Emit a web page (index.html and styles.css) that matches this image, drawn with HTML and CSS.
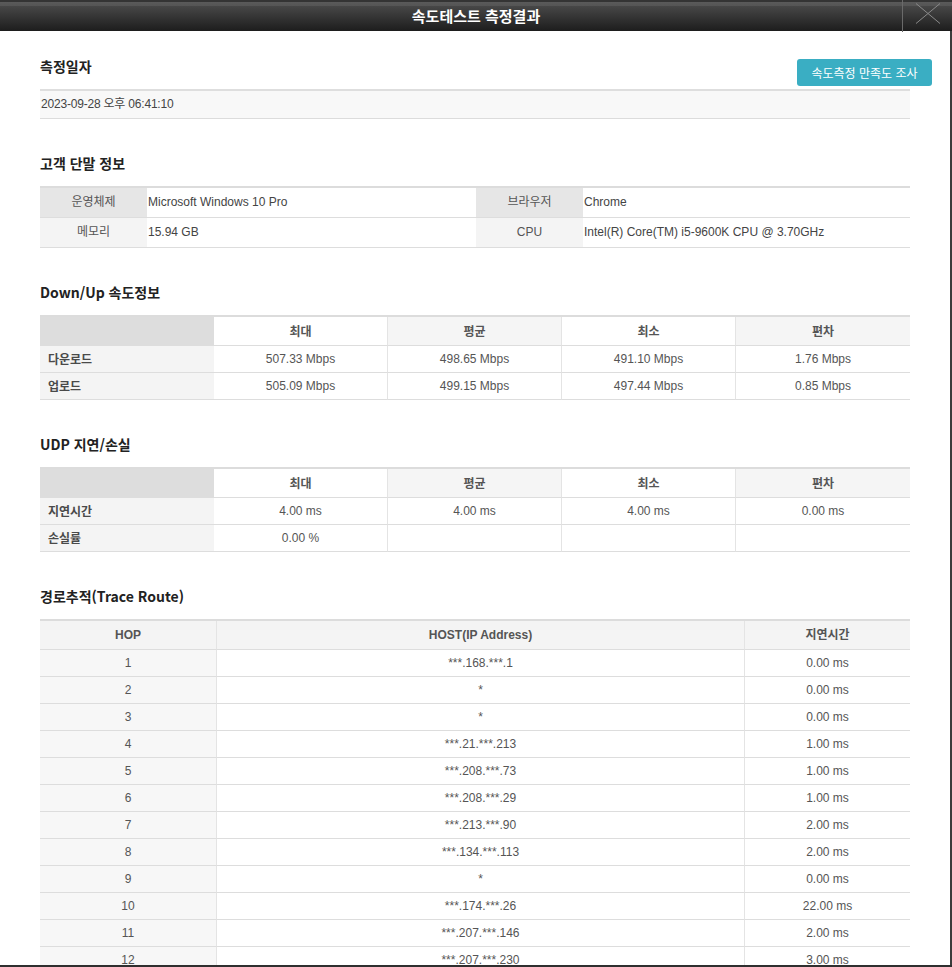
FILE: index.html
```html
<!DOCTYPE html>
<html lang="ko">
<head>
<meta charset="utf-8">
<title>속도테스트 측정결과</title>
<link rel="stylesheet" href="styles.css">
</head>
<body>
<div class="popup">
  <header class="titlebar">
    <h1 class="title">속도테스트 측정결과</h1>
    <button class="close" type="button" aria-label="닫기">
      <svg width="49" height="31" viewBox="0 0 49 31"><path d="M13 2.5 L37 22.5 M37 2.5 L13 22.5" stroke="#8a8a8a" stroke-width="1" fill="none"/></svg>
    </button>
  </header>
  <main class="content">
    <section class="section first">
      <div class="head-row">
        <h2 class="sec-title">측정일자</h2>
        <button class="survey" type="button">속도측정 만족도 조사</button>
      </div>
      <div class="date-band">2023-09-28 오후 06:41:10</div>
    </section>

    <section class="section">
      <h2 class="sec-title">고객 단말 정보</h2>
      <table class="tbl info">
        <colgroup><col class="c-lab"><col class="c-val1"><col class="c-lab"><col class="c-val2"></colgroup>
        <tr class="dark"><td class="lab">운영체제</td><td class="val">Microsoft Windows 10 Pro</td><td class="lab">브라우저</td><td class="val">Chrome</td></tr>
        <tr class="light"><td class="lab">메모리</td><td class="val">15.94 GB</td><td class="lab">CPU</td><td class="val">Intel(R) Core(TM) i5-9600K CPU @ 3.70GHz</td></tr>
      </table>
    </section>

    <section class="section">
      <h2 class="sec-title">Down/Up 속도정보</h2>
      <table class="tbl stat">
        <colgroup><col class="c-five"><col class="c-five"><col class="c-five"><col class="c-five"><col class="c-five"></colgroup>
        <tr class="hd"><th class="corner"></th><th>최대</th><th class="alt">평균</th><th>최소</th><th class="alt">편차</th></tr>
        <tr><td class="rowlab">다운로드</td><td>507.33 Mbps</td><td>498.65 Mbps</td><td>491.10 Mbps</td><td>1.76 Mbps</td></tr>
        <tr><td class="rowlab">업로드</td><td>505.09 Mbps</td><td>499.15 Mbps</td><td>497.44 Mbps</td><td>0.85 Mbps</td></tr>
      </table>
    </section>

    <section class="section">
      <h2 class="sec-title">UDP 지연/손실</h2>
      <table class="tbl stat">
        <colgroup><col class="c-five"><col class="c-five"><col class="c-five"><col class="c-five"><col class="c-five"></colgroup>
        <tr class="hd"><th class="corner"></th><th>최대</th><th class="alt">평균</th><th>최소</th><th class="alt">편차</th></tr>
        <tr><td class="rowlab">지연시간</td><td>4.00 ms</td><td>4.00 ms</td><td>4.00 ms</td><td>0.00 ms</td></tr>
        <tr><td class="rowlab">손실률</td><td>0.00 %</td><td></td><td></td><td></td></tr>
      </table>
    </section>

    <section class="section">
      <h2 class="sec-title">경로추적(Trace Route)</h2>
      <table class="tbl trace">
        <colgroup><col class="c-hop"><col class="c-host"><col class="c-lat"></colgroup>
        <tr class="hd"><th>HOP</th><th>HOST(IP Address)</th><th>지연시간</th></tr>
        <tr><td class="hop">1</td><td>***.168.***.1</td><td>0.00 ms</td></tr>
        <tr><td class="hop">2</td><td>*</td><td>0.00 ms</td></tr>
        <tr><td class="hop">3</td><td>*</td><td>0.00 ms</td></tr>
        <tr><td class="hop">4</td><td>***.21.***.213</td><td>1.00 ms</td></tr>
        <tr><td class="hop">5</td><td>***.208.***.73</td><td>1.00 ms</td></tr>
        <tr><td class="hop">6</td><td>***.208.***.29</td><td>1.00 ms</td></tr>
        <tr><td class="hop">7</td><td>***.213.***.90</td><td>2.00 ms</td></tr>
        <tr><td class="hop">8</td><td>***.134.***.113</td><td>2.00 ms</td></tr>
        <tr><td class="hop">9</td><td>*</td><td>0.00 ms</td></tr>
        <tr><td class="hop">10</td><td>***.174.***.26</td><td>22.00 ms</td></tr>
        <tr><td class="hop">11</td><td>***.207.***.146</td><td>2.00 ms</td></tr>
        <tr><td class="hop">12</td><td>***.207.***.230</td><td>3.00 ms</td></tr>
      </table>
    </section>
  </main>
</div>
</body>
</html>
```

FILE: styles.css
```css
* { box-sizing: border-box; }
html, body { margin: 0; padding: 0; }
body {
  width: 952px;
  height: 967px;
  overflow: hidden;
  background: #fff;
  font-family: "Liberation Sans", "Noto Sans CJK KR", sans-serif;
  color: #555;
}
.popup {
  width: 952px;
  height: 967px;
  display: flex;
  flex-direction: column;
  border-bottom: 2px solid #2f2f2f;
  overflow: hidden;
}
.titlebar {
  position: relative;
  height: 31px;
  flex: none;
  background: linear-gradient(to bottom, #343434 0, #343434 2px, #5a5a5a 2px, #555 6px, #474747 6px, #1d1d1d 31px);
  display: flex;
  align-items: center;
  justify-content: center;
}
.title {
  margin: 0;
  font-family: "Noto Sans CJK KR", sans-serif;
  font-size: 15px;
  font-weight: 700;
  color: #fff;
  line-height: 20px;
  padding-top: 1px;
}
.close {
  position: absolute;
  top: 0;
  right: 0;
  width: 50px;
  height: 32px;
  padding: 0;
  margin: 0;
  border: 0;
  border-left: 1px solid #6a6a6a;
  background: transparent;
}
.close svg { display: block; }
.content {
  flex: 1;
  width: 952px;
  padding: 25px 40px 0 40px;
  border-right: 2px solid #3c3c3c;
  overflow: hidden;
}
.section { margin-top: 34px; }
.section.first { margin-top: 0; }
.sec-title {
  margin: 0 0 13px 0;
  font-family: "Noto Sans CJK KR", sans-serif;
  font-size: 14px;
  font-weight: 700;
  line-height: 20px;
  color: #222;
}
.head-row {
  display: flex;
  justify-content: space-between;
  align-items: flex-start;
  height: 20px;
  margin: 0 -22px 13px 0;
}
.head-row .sec-title { margin: 0; }
.survey {
  margin-top: 3px;
  width: 135px;
  height: 27px;
  border: 0;
  border-radius: 3px;
  background: #3aaec3;
  color: #fff;
  font-family: "Noto Sans CJK KR", sans-serif;
  font-size: 12px;
  line-height: 27px;
  padding: 0;
}
.date-band {
  border-top: 2px solid #dedede;
  border-bottom: 1px solid #dcdcdc;
  background: #f8f8f8;
  height: 30px;
  line-height: 27px;
  padding-left: 1px;
  font-size: 12px;
  letter-spacing: -0.2px;
  color: #444;
}
.tbl {
  width: 870px;
  table-layout: fixed;
  border-collapse: separate;
  border-spacing: 0;
  border-top: 2px solid #dcdcdc;
  font-size: 12px;
}
.tbl td, .tbl th {
  padding: 0;
  border-bottom: 1px solid #dddddd;
  line-height: 26px;
  text-align: center;
  color: #555;
  white-space: nowrap;
  overflow: hidden;
}
.c-lab { width: 107px; }
.c-val1 { width: 329px; }
.c-val2 { width: 327px; }
.info td { line-height: 29px; }
.info .val { text-align: left; padding-left: 1px; background: #fff; color: #444; }
.info .dark .lab { background: #e6e6e6; }
.info .light .lab { background: #f4f4f4; }
.info .lab { color: #555; }

.c-five { width: 174px; }
.stat th, .stat td { border-right: 1px solid #e4e4e4; }
.stat th:last-child, .stat td:last-child { border-right: 0; }
.stat .hd th {
  line-height: 28px;
  font-family: "Noto Sans CJK KR", sans-serif;
  font-weight: 700;
  font-size: 12px;
  background: #fff;
  color: #555;
}
.stat .hd th.alt { background: #f5f5f5; }
.stat .hd th.corner { background: #dddddd; border-right: 0; }
.stat .rowlab {
  text-align: left;
  padding-left: 8px;
  background: #f4f4f4;
  font-family: "Noto Sans CJK KR", sans-serif;
  font-weight: 700;
  color: #4a4a4a;
  border-right: 0;
}

.c-hop { width: 177px; }
.c-host { width: 528px; }
.c-lat { width: 165px; }
.trace th, .trace td { border-right: 1px solid #e4e4e4; }
.trace th:last-child, .trace td:last-child { border-right: 0; }
.trace .hd th {
  line-height: 28px;
  background: #f4f4f4;
  font-weight: 700;
  color: #555;
}
.trace .hop { background: #f7f7f7; }
```
